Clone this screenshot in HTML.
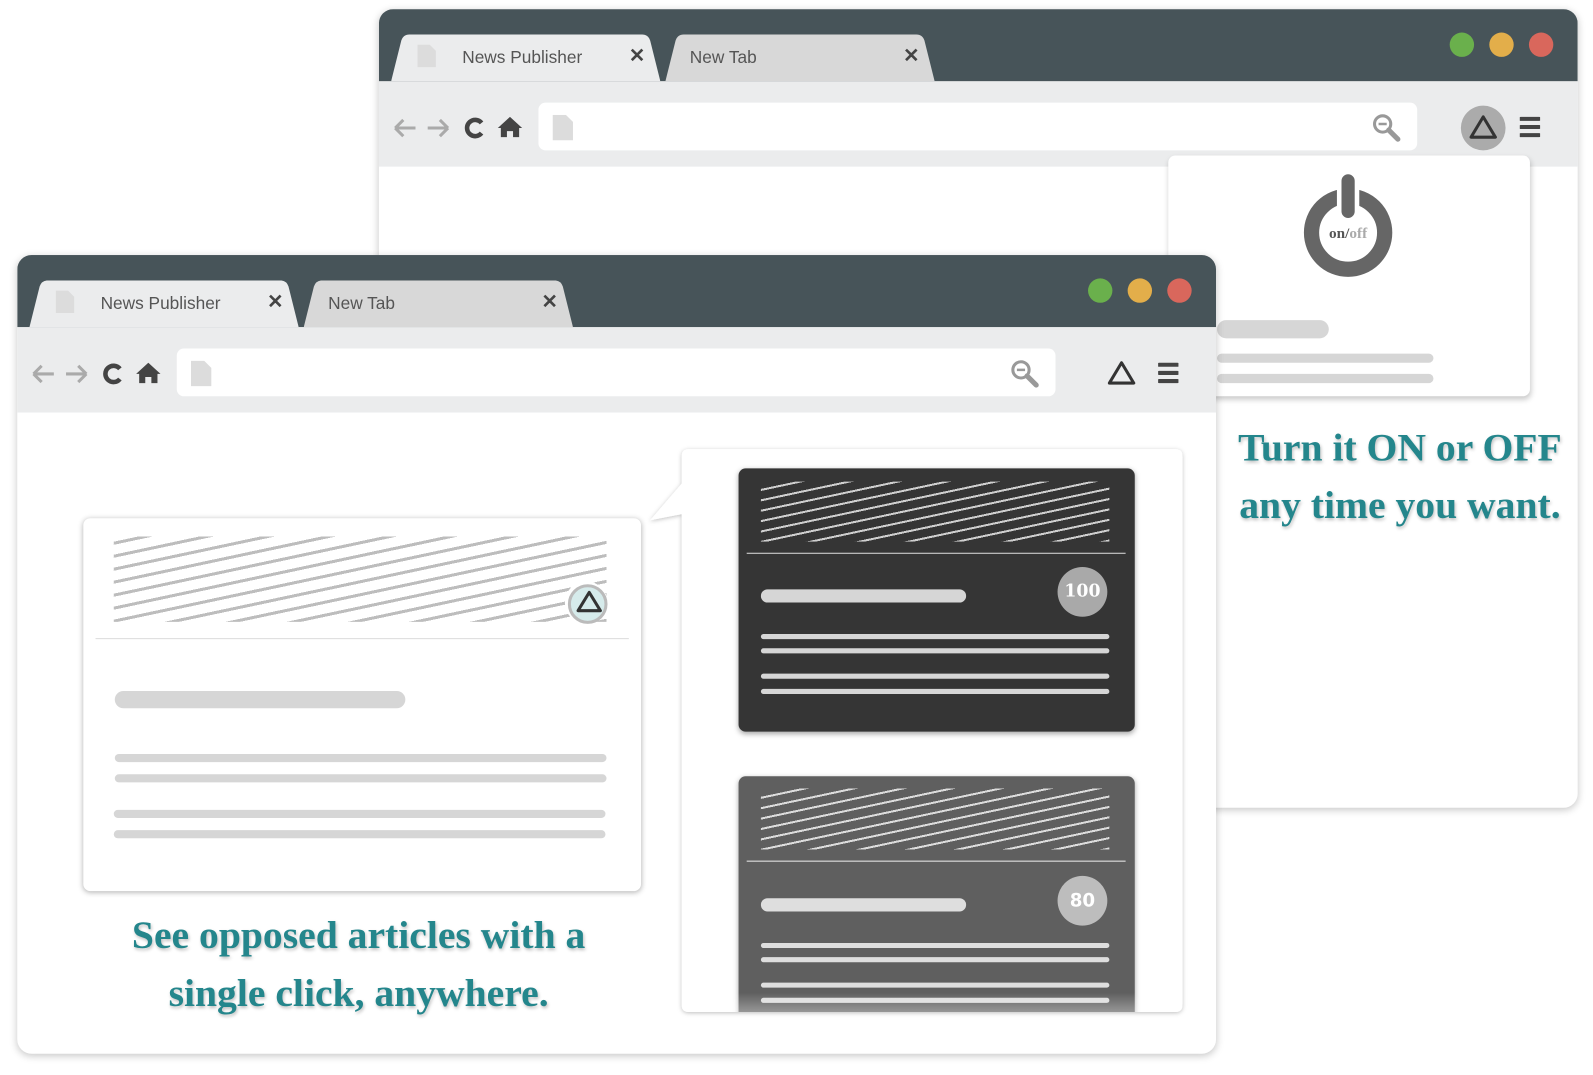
<!DOCTYPE html>
<html><head><meta charset="utf-8"><style>
html,body{margin:0;padding:0;background:#fff;overflow:hidden;width:1593px;height:1075px}
#s{position:absolute;left:0;top:0;width:1568px;height:1058px;transform:scale(1.0159,1.0161);transform-origin:0 0}
.a{position:absolute}
.win{position:absolute;width:1180px;height:786px;background:#fff;border-radius:14px;overflow:hidden;box-shadow:0 2px 8px rgba(0,0,0,.22)}
.tb{position:absolute;left:0;top:0;width:100%;height:71px;background:#475459}
.too{position:absolute;left:0;top:71px;width:100%;height:84px;background:#ebeced}
.tab{position:absolute;top:25px;height:46px;width:265px}
.tab svg{position:absolute;left:0;top:0}
.tab .t{position:absolute;left:70px;top:13px;font:17px "Liberation Sans",sans-serif;color:#555}
.tab .x{position:absolute;left:234px;top:10px;font:bold 19px "Liberation Sans",sans-serif;color:#444}
.dot{position:absolute;top:23px;width:24px;height:24px;border-radius:50%}
.addr{position:absolute;left:157px;top:92px;width:865px;height:47px;background:#fff;border-radius:7px}
.str{background:repeating-linear-gradient(-12deg,#bdbdbd 0 3px,transparent 3px 12.5px)}
.bar{position:absolute;border-radius:8px;background:#d6d6d6}
.txt{position:absolute;font:bold 39px "Liberation Serif","DejaVu Serif",serif;color:#24868c;text-align:center;text-shadow:1px 2px 3px rgba(0,0,0,.25)}
</style></head><body><div id="s">

<div class="win" style="left:373px;top:9px">
 <div class="tb"></div><div class="too"></div>
 <div class="tab" style="left:12px"><svg width="265" height="46"><path d="M0 46 L10 6 Q12 0 18 0 L247 0 Q253 0 255 6 L265 46Z" fill="#ebeced"/><path d="M26 10h12l6 6v16h-18z" fill="#dcdcdc"/></svg><div class="t">News Publisher</div><div class="x">✕</div></div>
 <div class="tab" style="left:282px"><svg width="265" height="46"><path d="M0 46 L10 6 Q12 0 18 0 L247 0 Q253 0 255 6 L265 46Z" fill="#d8d8d8"/></svg><div class="t" style="left:24px">New Tab</div><div class="x">✕</div></div>
 <div class="dot" style="left:1054px;background:#6ab04c"></div><div class="dot" style="left:1093px;background:#e3ae4a"></div><div class="dot" style="left:1132px;background:#d9675c"></div>
 <svg class="a" style="left:12px;top:104px" width="135" height="26"><path d="M4 13h20M4 13l8-8M4 13l8 8" stroke="#aaa" stroke-width="3" fill="none"/><path d="M36 13h20M56 13l-8-8M56 13l-8 8" stroke="#aaa" stroke-width="3" fill="none"/><path d="M89 8a8 8 0 1 0 0 10" stroke="#444" stroke-width="4.5" fill="none"/><path d="M105 13l12-11 12 11h-3v9h-6v-6h-6v6h-6v-9z" fill="#444"/></svg>
 <div class="addr"><svg class="a" style="left:14px;top:12px" width="22" height="26"><path d="M0 0h13l7 7v18h-20z" fill="#dcdcdc"/></svg><svg class="a" style="left:820px;top:10px" width="30" height="30"><circle cx="11" cy="11" r="8" stroke="#999" stroke-width="3" fill="none"/><path d="M7 11h8" stroke="#999" stroke-width="2.5"/><path d="M17 17l9 9" stroke="#999" stroke-width="5" stroke-linecap="round"/></svg></div>
 <div class="a" style="left:1065px;top:95px;width:44px;height:44px;border-radius:50%;background:#ababab"></div>
 <svg class="a" style="left:1071px;top:101px" width="32" height="32"><path d="M16 5 L28 25 L4 25Z" stroke="#333" stroke-width="3" fill="none" stroke-linejoin="round"/></svg>
 <svg class="a" style="left:1123px;top:105px" width="20" height="22"><path d="M1 3h18M1 11h18M1 19h18" stroke="#444" stroke-width="4" stroke-linecap="round"/></svg>
</div>

<div class="a" style="left:1150px;top:153px;width:356px;height:237px;background:#fff;border-radius:7px;box-shadow:1px 3px 6px rgba(0,0,0,.22)">
 <svg class="a" style="left:127px;top:15px" width="100" height="110"><circle cx="50" cy="61" r="36" stroke="#666" stroke-width="15" fill="none"/><path d="M50 11v36" stroke="#fff" stroke-width="22"/><path d="M50 10v30" stroke="#666" stroke-width="13" stroke-linecap="round"/><text x="50" y="66" text-anchor="middle" font-family="Liberation Serif,serif" font-weight="bold" font-size="15" fill="#555">on/<tspan fill="#aaa">off</tspan></text></svg>
 <div class="bar" style="left:48px;top:162px;width:110px;height:18px;border-radius:9px"></div>
 <div class="bar" style="left:48px;top:195px;width:213px;height:9px"></div>
 <div class="bar" style="left:48px;top:215px;width:213px;height:9px"></div>
</div>

<div class="txt" style="left:1178px;top:412px;width:400px;line-height:57px">Turn it ON or OFF<br>any time you want.</div>

<div class="win" style="left:17px;top:251px">
 <div class="tb"></div><div class="too"></div>
 <div class="tab" style="left:12px"><svg width="265" height="46"><path d="M0 46 L10 6 Q12 0 18 0 L247 0 Q253 0 255 6 L265 46Z" fill="#ebeced"/><path d="M26 10h12l6 6v16h-18z" fill="#dcdcdc"/></svg><div class="t">News Publisher</div><div class="x">✕</div></div>
 <div class="tab" style="left:282px"><svg width="265" height="46"><path d="M0 46 L10 6 Q12 0 18 0 L247 0 Q253 0 255 6 L265 46Z" fill="#d8d8d8"/></svg><div class="t" style="left:24px">New Tab</div><div class="x">✕</div></div>
 <div class="dot" style="left:1054px;background:#6ab04c"></div><div class="dot" style="left:1093px;background:#e3ae4a"></div><div class="dot" style="left:1132px;background:#d9675c"></div>
 <svg class="a" style="left:12px;top:104px" width="135" height="26"><path d="M4 13h20M4 13l8-8M4 13l8 8" stroke="#aaa" stroke-width="3" fill="none"/><path d="M36 13h20M56 13l-8-8M56 13l-8 8" stroke="#aaa" stroke-width="3" fill="none"/><path d="M89 8a8 8 0 1 0 0 10" stroke="#444" stroke-width="4.5" fill="none"/><path d="M105 13l12-11 12 11h-3v9h-6v-6h-6v6h-6v-9z" fill="#444"/></svg>
 <div class="addr"><svg class="a" style="left:14px;top:12px" width="22" height="26"><path d="M0 0h13l7 7v18h-20z" fill="#dcdcdc"/></svg><svg class="a" style="left:820px;top:10px" width="30" height="30"><circle cx="11" cy="11" r="8" stroke="#999" stroke-width="3" fill="none"/><path d="M7 11h8" stroke="#999" stroke-width="2.5"/><path d="M17 17l9 9" stroke="#999" stroke-width="5" stroke-linecap="round"/></svg></div>
 <svg class="a" style="left:1071px;top:101px" width="32" height="32"><path d="M16 5 L28 25 L4 25Z" stroke="#333" stroke-width="3" fill="none" stroke-linejoin="round"/></svg>
 <svg class="a" style="left:1123px;top:105px" width="20" height="22"><path d="M1 3h18M1 11h18M1 19h18" stroke="#444" stroke-width="4" stroke-linecap="round"/></svg>
</div>

<div class="a" style="left:82px;top:510px;width:549px;height:367px;background:#fff;border-radius:7px;box-shadow:0 1px 5px rgba(0,0,0,.3)">
 <div class="a str" style="left:30px;top:18px;width:485px;height:84px"></div>
 <div class="a" style="left:12px;top:118px;width:525px;height:1px;background:#ddd"></div>
 <div class="a" style="left:474px;top:62px;width:42px;height:42px;border-radius:50%;background:#fff"></div>
 <div class="a" style="left:477px;top:65px;width:33px;height:33px;border-radius:50%;background:#d6ebeb;border:3px solid #bbb"></div>
 <svg class="a" style="left:483px;top:69px" width="30" height="28"><path d="M15 4 L26 22 L4 22Z" stroke="#333" stroke-width="3" fill="none" stroke-linejoin="round"/></svg>
 <div class="bar" style="left:31px;top:170px;width:286px;height:17px;border-radius:9px"></div>
 <div class="bar" style="left:31px;top:232px;width:484px;height:8px"></div>
 <div class="bar" style="left:31px;top:252px;width:484px;height:8px"></div>
 <div class="bar" style="left:30px;top:287px;width:484px;height:8px"></div>
 <div class="bar" style="left:30px;top:307px;width:484px;height:8px"></div>
</div>

<div class="txt" style="left:70px;top:892px;width:566px;line-height:57px">See opposed articles with a<br>single click, anywhere.</div>

<svg class="a" style="left:630px;top:436px;overflow:visible" width="545" height="570"><defs><filter id="f" x="-5%" y="-5%" width="110%" height="110%"><feDropShadow dx="0" dy="1" stdDeviation="2" flood-opacity=".25"/></filter></defs><path d="M48 6 H527 Q534 6 534 13 V553 Q534 560 527 560 H48 Q41 560 41 553 V70 L10 76 L41 40 V13 Q41 6 48 6Z" fill="#fff" filter="url(#f)"/></svg>

<div class="a" style="left:671px;top:442px;width:493px;height:554px;overflow:hidden;border-radius:0 0 7px 7px">
 <div class="a" style="left:56px;top:19px;width:390px;height:259px;background:#353535;border-radius:7px;box-shadow:0 2px 5px rgba(0,0,0,.35)">
  <div class="a" style="left:22px;top:13px;width:343px;height:59px;background:repeating-linear-gradient(-12deg,#cfcfcf 0 2px,transparent 2px 10px)"></div>
  <div class="a" style="left:8px;top:83px;width:373px;height:1px;background:#ddd"></div>
  <div class="bar" style="left:22px;top:119px;width:202px;height:13px"></div>
  <div class="a" style="left:314px;top:97px;width:49px;height:49px;border-radius:50%;background:#a9a9a9;color:#fff;font:bold 17px 'DejaVu Serif',serif;text-align:center;line-height:49px">100</div>
  <div class="bar" style="left:22px;top:163px;width:343px;height:5px"></div>
  <div class="bar" style="left:22px;top:177px;width:343px;height:5px"></div>
  <div class="bar" style="left:22px;top:202px;width:343px;height:5px"></div>
  <div class="bar" style="left:22px;top:217px;width:343px;height:5px"></div>
 </div>
 <div class="a" style="left:56px;top:322px;width:390px;height:259px;background:#5f5f5f;border-radius:7px;box-shadow:0 2px 5px rgba(0,0,0,.35)">
  <div class="a" style="left:22px;top:12px;width:343px;height:60px;background:repeating-linear-gradient(-12deg,#dcdcdc 0 2px,transparent 2px 10px)"></div>
  <div class="a" style="left:8px;top:83px;width:373px;height:1px;background:#eee"></div>
  <div class="bar" style="left:22px;top:120px;width:202px;height:13px;background:#dedede"></div>
  <div class="a" style="left:314px;top:98px;width:49px;height:49px;border-radius:50%;background:#bdbdbd;color:#fff;font:bold 18px 'DejaVu Sans',sans-serif;text-align:center;line-height:49px">80</div>
  <div class="bar" style="left:22px;top:164px;width:343px;height:5px;background:#dedede"></div>
  <div class="bar" style="left:22px;top:178px;width:343px;height:5px;background:#dedede"></div>
  <div class="bar" style="left:22px;top:203px;width:343px;height:5px;background:#dedede"></div>
  <div class="bar" style="left:22px;top:218px;width:343px;height:5px;background:#dedede"></div>
 </div>
 <div class="a" style="left:0;top:535px;width:493px;height:19px;background:linear-gradient(rgba(255,255,255,0),rgba(255,255,255,.35))"></div>
</div>

</div></body></html>
